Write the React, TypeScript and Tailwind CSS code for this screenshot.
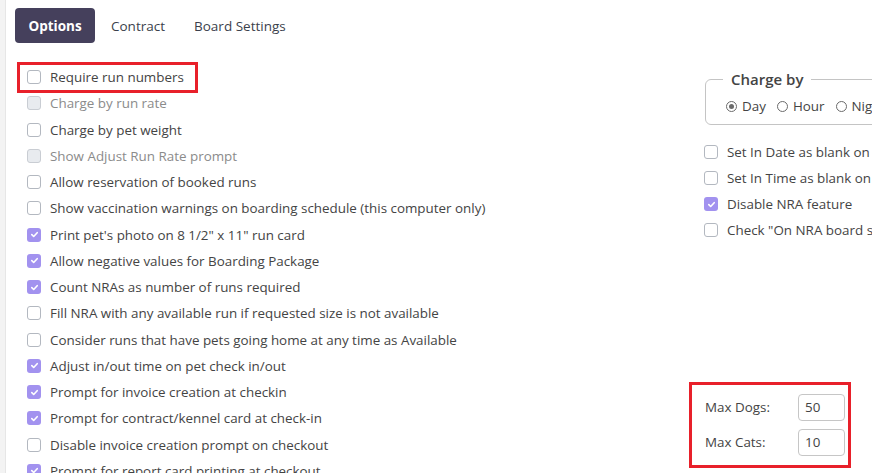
import React from 'react';

type Kind = 'off' | 'on' | 'disabled';

interface RowProps {
  label: string;
  kind: Kind;
}

const leftRows: RowProps[] = [
  { label: 'Require run numbers', kind: 'off' },
  { label: 'Charge by run rate', kind: 'disabled' },
  { label: 'Charge by pet weight', kind: 'off' },
  { label: 'Show Adjust Run Rate prompt', kind: 'disabled' },
  { label: 'Allow reservation of booked runs', kind: 'off' },
  { label: 'Show vaccination warnings on boarding schedule (this computer only)', kind: 'off' },
  { label: 'Print pet\'s photo on 8 1/2" x 11" run card', kind: 'on' },
  { label: 'Allow negative values for Boarding Package', kind: 'on' },
  { label: 'Count NRAs as number of runs required', kind: 'on' },
  { label: 'Fill NRA with any available run if requested size is not available', kind: 'off' },
  { label: 'Consider runs that have pets going home at any time as Available', kind: 'off' },
  { label: 'Adjust in/out time on pet check in/out', kind: 'on' },
  { label: 'Prompt for invoice creation at checkin', kind: 'on' },
  { label: 'Prompt for contract/kennel card at check-in', kind: 'on' },
  { label: 'Disable invoice creation prompt on checkout', kind: 'off' },
  { label: 'Prompt for report card printing at checkout', kind: 'on' },
];

const rightRows: RowProps[] = [
  { label: 'Set In Date as blank on new reservation', kind: 'off' },
  { label: 'Set In Time as blank on new reservation', kind: 'off' },
  { label: 'Disable NRA feature', kind: 'on' },
  { label: 'Check "On NRA board slot" by default', kind: 'off' },
];

const Box = ({ kind }: { kind: Kind }) => {
  if (kind === 'on') {
    return (
      <span className="flex h-[14px] w-[14px] shrink-0 items-center justify-center rounded-[3px] bg-[#a292ef]">
        <svg width="9" height="9" viewBox="0 0 10 10" fill="none">
          <path d="M2 5.2 L4.1 7.2 L8 3" stroke="#fff" strokeWidth="1.8" strokeLinecap="round" strokeLinejoin="round" />
        </svg>
      </span>
    );
  }
  if (kind === 'disabled') {
    return <span className="h-[14px] w-[14px] shrink-0 rounded-[3px] border border-[#c9cdd3] bg-[#e8ebef]" />;
  }
  return <span className="h-[14px] w-[14px] shrink-0 rounded-[3px] border border-[#b3b8c0] bg-white" />;
};

const CheckRow = ({ label, kind }: RowProps) => (
  <div className="flex h-[26.25px] items-center gap-[9px] whitespace-nowrap">
    <Box kind={kind} />
    <span className={kind === 'disabled' ? 'text-[#8b8b8b]' : 'text-[#444]'}>{label}</span>
  </div>
);

const Radio = ({ label, checked }: { label: string; checked?: boolean }) => (
  <label className="flex items-center gap-[5px]">
    <span className="flex h-[11px] w-[11px] items-center justify-center rounded-full border border-[#6b6b6b] bg-white">
      {checked && <span className="h-[5px] w-[5px] rounded-full bg-[#6b6b6b]" />}
    </span>
    <span className="text-[#444]">{label}</span>
  </label>
);

export default function App() {
  return (
    <div
      className="flex h-[473px] w-[872px] overflow-hidden bg-white text-[13.4px]"
      style={{ fontFamily: '"Open Sans", "Noto Sans", sans-serif' }}
    >
      {/* left page gutter */}
      <div className="w-[6px] shrink-0 border-r border-[#e6e6e6] bg-[#f3f3f3]" />

      {/* main options column */}
      <div className="w-[683px] shrink-0 pl-[9px] pt-[8px]">
        <div className="flex items-center text-[13.5px]">
          <button className="h-[35px] w-[80px] rounded-[4px] bg-[#45405c] pt-[2px] font-bold text-white">Options</button>
          <button className="ml-[16px] pt-[2px] text-[#3b3f4c]">Contract</button>
          <button className="ml-[29px] pt-[2px] text-[#3b3f4c]">Board Settings</button>
        </div>

        <div className="mt-[21px] pl-[12px]">
          {leftRows.map((row, i) => (
            <div key={row.label} className="relative">
              {i === 0 && (
                <div className="pointer-events-none absolute -left-[10px] -top-[2px] h-[31px] w-[181px] border-[3px] border-[#e8202a]" />
              )}
              <CheckRow {...row} />
            </div>
          ))}
        </div>
      </div>

      {/* right settings column */}
      <div className="w-[340px] shrink-0">
        <fieldset className="ml-[16px] mt-[68px] rounded-[6px] border border-[#c4c4c4] pb-[7px] pl-[20px] pt-[6px]">
          <legend className="-ml-[3px] px-[8px] text-[15px] font-semibold text-[#444]">Charge by</legend>
          <div className="flex h-[20px] items-center gap-[11px]">
            <Radio label="Day" checked />
            <Radio label="Hour" />
            <Radio label="Night" />
          </div>
        </fieldset>

        <div className="ml-[15px] mt-[14px]">
          {rightRows.map((row) => (
            <CheckRow key={row.label} {...row} />
          ))}
        </div>

        <div className="mt-[138px] w-[162px] border-[3px] border-[#e8202a] py-[9px] pl-[13px] pr-[3px]">
          <div className="flex flex-col gap-[8px]">
            <div className="flex items-center">
              <span className="w-[93px] text-[#444]">Max Dogs:</span>
              <input
                defaultValue="50"
                className="h-[27px] w-[47px] rounded-[4px] border border-[#c6c6c6] px-[6px] text-[#444] outline-none"
              />
            </div>
            <div className="flex items-center">
              <span className="w-[93px] text-[#444]">Max Cats:</span>
              <input
                defaultValue="10"
                className="h-[27px] w-[47px] rounded-[4px] border border-[#c6c6c6] px-[6px] text-[#444] outline-none"
              />
            </div>
          </div>
        </div>
      </div>
    </div>
  );
}
